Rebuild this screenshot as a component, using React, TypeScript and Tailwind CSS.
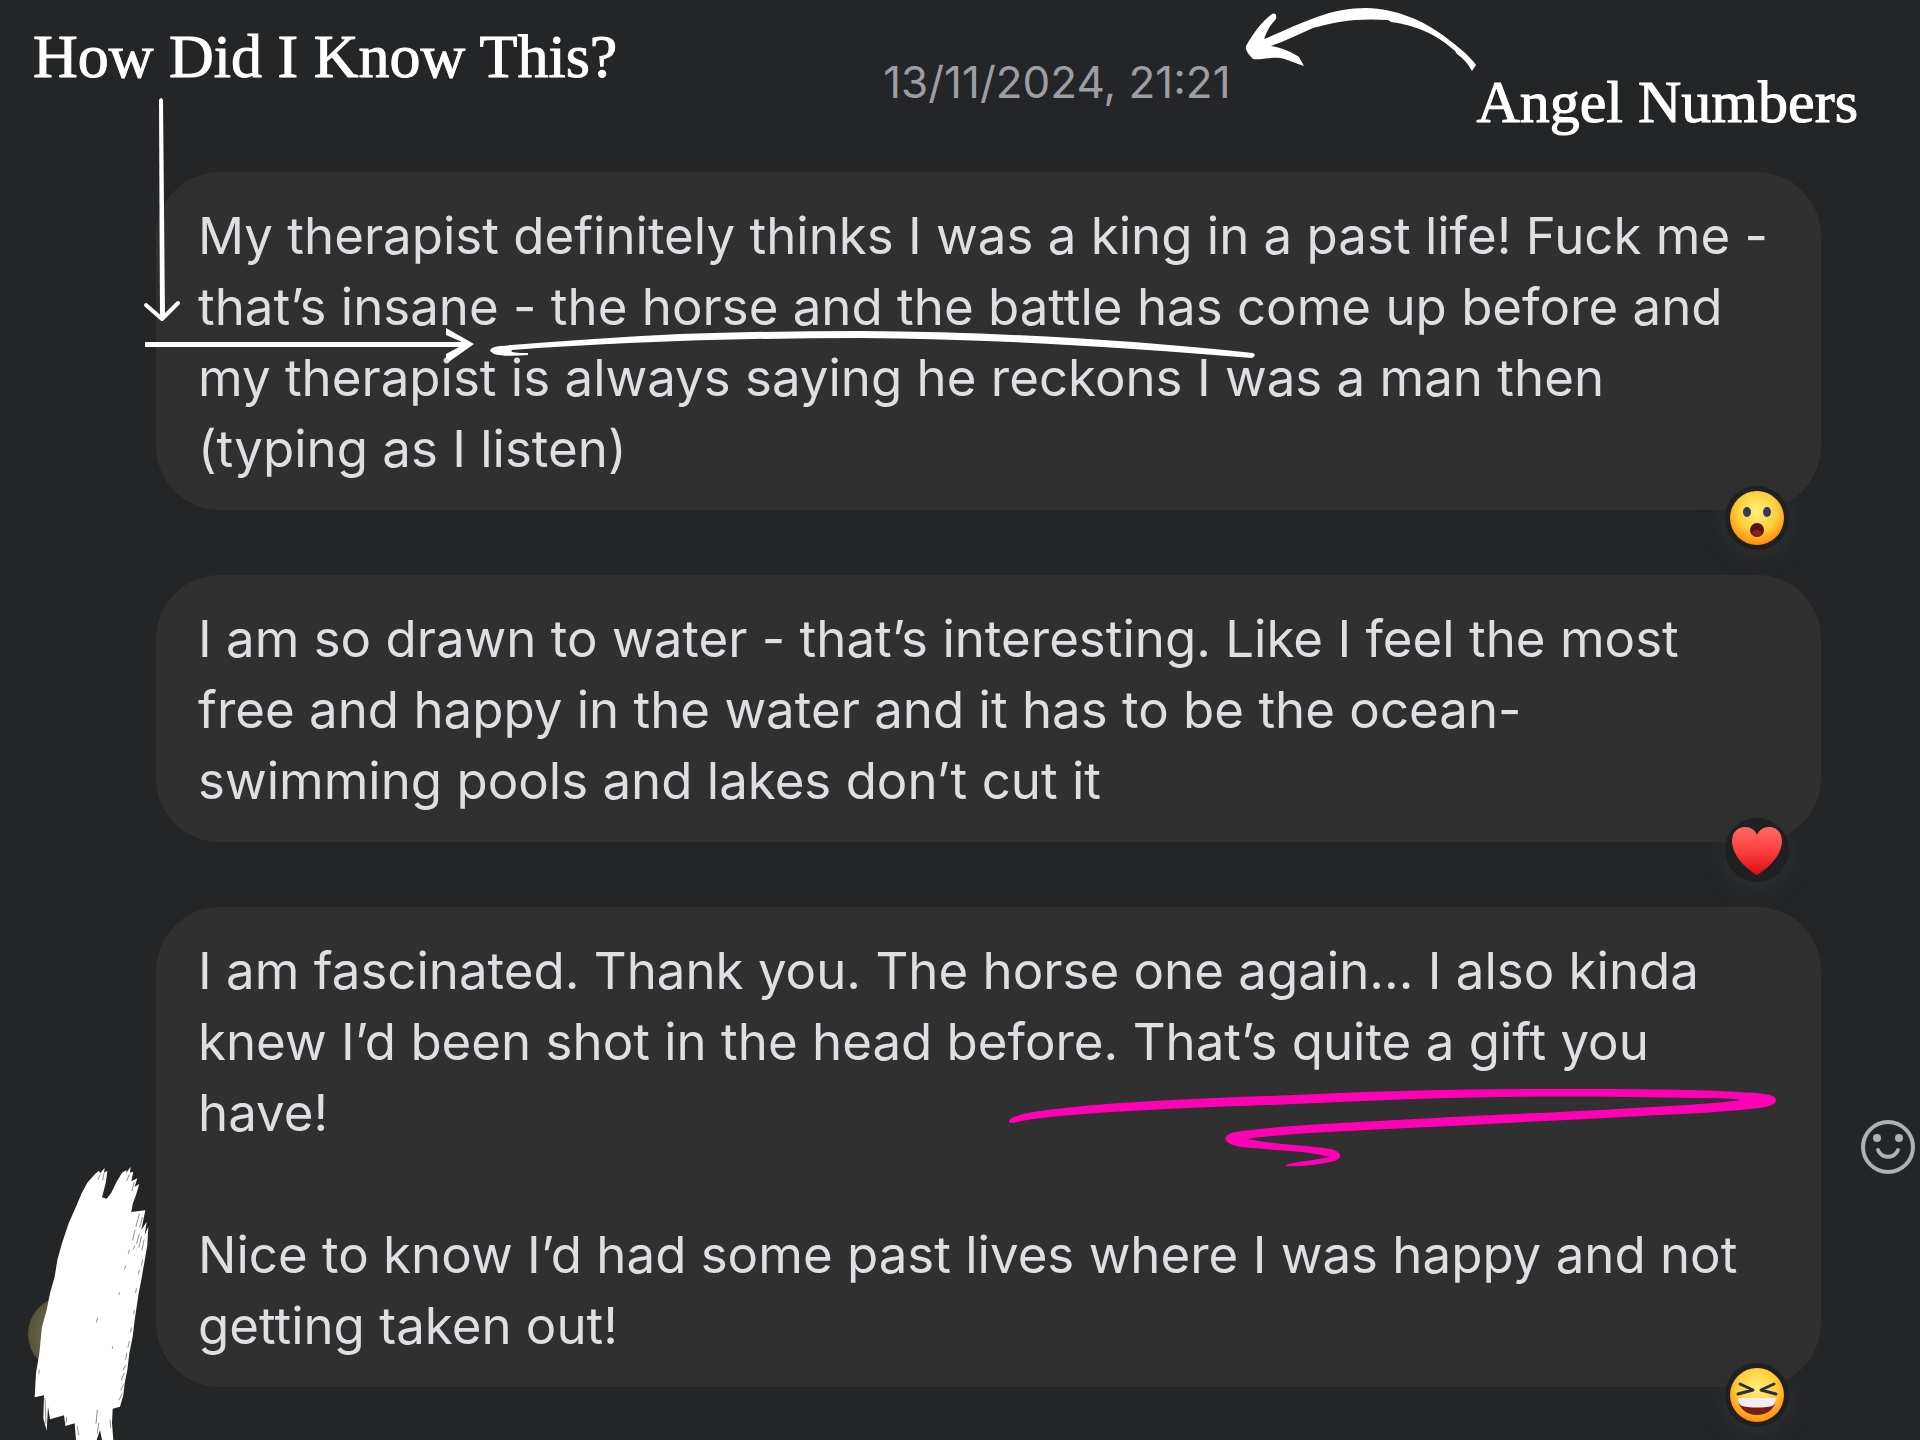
import type { ReactNode } from 'react';

type Message = {
  id: number;
  text: string;
  label: string;
  reaction: ReactNode;
  last?: boolean;
};

function WowFace() {
  return (
    <svg viewBox="0 0 54 54" className="size-[54px]" aria-hidden="true">
      <defs>
        <radialGradient id="wow" cx="50%" cy="38%" r="65%">
          <stop offset="0%" stopColor="#fff07c" />
          <stop offset="55%" stopColor="#ffd03c" />
          <stop offset="100%" stopColor="#ff8208" />
        </radialGradient>
      </defs>
      <circle cx="27" cy="27" r="27" fill="url(#wow)" />
      <ellipse cx="17" cy="21" rx="4" ry="5" fill="#343a5e" />
      <ellipse cx="37" cy="21" rx="4" ry="5" fill="#343a5e" />
      <ellipse cx="27" cy="39" rx="7" ry="7" fill="#5a0d12" />
      <ellipse cx="27" cy="42" rx="5" ry="3" fill="#86201e" />
    </svg>
  );
}

function Heart() {
  return (
    <svg viewBox="0 0 54 54" className="size-[54px]" aria-hidden="true">
      <defs>
        <linearGradient id="heart" x1="0" y1="0" x2="0" y2="1">
          <stop offset="0%" stopColor="#ff6a64" />
          <stop offset="55%" stopColor="#fb3a3c" />
          <stop offset="100%" stopColor="#d80d12" />
        </linearGradient>
      </defs>
      <path
        d="M27 52C24 51 2 36 2 18 2 9 8 4 15 4 21 4 25 7 27 12 29 7 33 4 39 4 46 4 52 9 52 18 52 36 30 51 27 52Z"
        fill="url(#heart)"
      />
    </svg>
  );
}

function LaughFace() {
  return (
    <svg viewBox="0 0 54 54" className="size-[54px]" aria-hidden="true">
      <defs>
        <radialGradient id="laugh" cx="50%" cy="38%" r="65%">
          <stop offset="0%" stopColor="#fff07c" />
          <stop offset="55%" stopColor="#ffd03c" />
          <stop offset="100%" stopColor="#ff8208" />
        </radialGradient>
      </defs>
      <circle cx="27" cy="27" r="27" fill="url(#laugh)" />
      <path
        d="M10 16 23 22 8 26M44 16 31 22 46 26"
        fill="none"
        stroke="#2b2c46"
        strokeWidth="3"
        strokeLinecap="round"
        strokeLinejoin="round"
      />
      <path d="M8 30H46C46 40 38 47 27 47S8 40 8 30Z" fill="#7c1c17" />
      <path d="M8 30H46C46 35 44 37 42 38 33 40 21 40 12 38 10 37 8 35 8 30Z" fill="#f1eef6" />
    </svg>
  );
}

const messages: Message[] = [
  {
    id: 1,
    text: 'My therapist definitely thinks I was a king in a past life! Fuck me -\nthat’s insane - the horse and the battle has come up before and\nmy therapist is always saying he reckons I was a man then\n(typing as I listen)',
    label: 'Wow reaction',
    reaction: <WowFace />,
  },
  {
    id: 2,
    text: 'I am so drawn to water - that’s interesting. Like I feel the most\nfree and happy in the water and it has to be the ocean-\nswimming pools and lakes don’t cut it',
    label: 'Heart reaction',
    reaction: <Heart />,
  },
  {
    id: 3,
    text: 'I am fascinated. Thank you. The horse one again... I also kinda\nknew I’d been shot in the head before. That’s quite a gift you\nhave!\n\nNice to know I’d had some past lives where I was happy and not\ngetting taken out!',
    label: 'Laugh reaction',
    reaction: <LaughFace />,
    last: true,
  },
];

function MessageRow({ message }: { message: Message }) {
  return (
    <li className="flex pr-[5px]">
      <div className="flex w-[156px] shrink-0 items-end pb-[15px] pl-7">
        {message.last && (
          <div className="size-[76px] rounded-full bg-radial from-[#7d7a5c] to-[#47452f]" />
        )}
      </div>

      <div className="relative flex-1 rounded-[64px] bg-[#303030] px-[42px] pt-[28px] pb-[26px]">
        <p className="whitespace-pre text-[51px] leading-[71px] text-[#dedee3]">{message.text}</p>
        <button
          type="button"
          aria-label={message.label}
          className="absolute right-8 -bottom-10 flex size-16 items-center justify-center rounded-full bg-[#1f2021] shadow-[0_4px_20px_2px_#2d2f31]"
        >
          {message.reaction}
        </button>
      </div>

      <div className="ml-10 flex w-[54px] shrink-0 items-center">
        {message.last && (
          <button type="button" aria-label="Add reaction">
            <svg viewBox="0 0 54 54" className="size-[54px]" fill="none" stroke="#b0b1b8" strokeWidth="4">
              <circle cx="27" cy="27" r="25" />
              <circle cx="16" cy="18" r="4" fill="#b0b1b8" stroke="none" />
              <circle cx="38" cy="18" r="4" fill="#b0b1b8" stroke="none" />
              <path d="M17 30C21 39 33 39 37 30" strokeLinecap="round" />
            </svg>
          </button>
        )}
      </div>
    </li>
  );
}

// Hand-drawn marks laid over the conversation
function Marks() {
  return (
    <div className="pointer-events-none absolute inset-0 text-white" aria-hidden="true">
      {/* down arrow */}
      <svg viewBox="140 90 50 240" className="absolute top-[90px] left-[140px] w-[50px]">
        <path d="M159 100Q161 96 163 100L165 318H160Z" fill="currentColor" />
        <path
          d="M146 305 162 319 178 303"
          fill="none"
          stroke="currentColor"
          strokeWidth="4"
          strokeLinecap="round"
          strokeLinejoin="round"
        />
      </svg>

      {/* right arrow */}
      <svg viewBox="140 320 340 50" className="absolute top-[320px] left-[140px] w-[340px]">
        <path d="M145 342H462L446 335V328L474 344 450 361 446 358V354L459 347H145Z" fill="currentColor" />
      </svg>

      {/* underline on the first message */}
      <svg viewBox="480 320 790 50" className="absolute top-[320px] left-[480px] w-[790px]">
        <path
          d="M490 351Q490 347 500 346C560 341 620 337 680 334 740 332 800 331 860 331 1000 332 1130 340 1253 353Q1257 355 1252 358C1130 348 1000 339 860 338 740 338 620 342 512 350Q508 353 528 353L528 355Q505 357 494 354Z"
          fill="currentColor"
        />
      </svg>

      {/* curved arrow */}
      <svg viewBox="1240 0 250 80" className="absolute top-0 left-[1240px] w-[250px]">
        <path
          d="M1472 71C1468 64 1464 59 1457 54L1455 51C1440 37 1420 26 1391 22L1388 20C1358 18 1337 21 1313 28 1299 34 1285 41 1271 46 1282 48 1292 52 1299 57L1304 66C1296 64 1288 59 1280 58 1270 57 1260 60 1253 59 1250 56 1245 51 1246 46 1253 34 1261 22 1272 14Q1277 12 1276 19C1270 25 1267 31 1264 39 1282 32 1299 23 1317 17 1333 11 1350 8 1366 8 1397 9 1422 20 1444 36 1457 46 1469 55 1476 65Z"
          fill="currentColor"
        />
      </svg>

      {/* pink scribble */}
      <svg viewBox="1000 1080 790 100" className="absolute top-[1080px] left-[1000px] w-[790px]">
        <path
          d="M1009 1122C1008 1117 1025 1113 1040 1111 1070 1107 1100 1104 1137 1102 1190 1099 1240 1097 1294 1095 1380 1091 1470 1089 1555 1089 1620 1089 1690 1089 1738 1092 1760 1093 1776 1094 1776 1100 1776 1106 1765 1108 1740 1110 1715 1112 1690 1114 1660 1115 1590 1119 1520 1122 1451 1126 1390 1129 1340 1131 1294 1134 1275 1136 1258 1137 1248 1139 1270 1144 1310 1146 1330 1149 1344 1152 1343 1160 1330 1162 1315 1165 1300 1167 1286 1166 1284 1163 1310 1161 1330 1157 1310 1151 1270 1150 1241 1147 1222 1144 1221 1135 1235 1132 1290 1124 1370 1122 1451 1117 1510 1114 1570 1112 1634 1108 1670 1106 1710 1104 1741 1100 1730 1098 1710 1098 1697 1098 1630 1097 1570 1096 1503 1097 1430 1098 1360 1101 1294 1104 1220 1107 1150 1109 1085 1114 1060 1116 1035 1118 1017 1122Q1010 1124 1009 1122Z"
          fill="#ff00b5"
        />
      </svg>

      {/* brush stroke hiding the avatar */}
      <svg viewBox="0 0 600 900" className="absolute top-[1140px] left-0 w-[200px]">
        <path
          d="M104 772 108 700 118 640 126 560 140 510 150 460 164 410 172 360 186 310 206 250 226 205 245 160 262 128 285 102 297 92 300 100 314 84 312 98 322 92 318 125 308 165 306 172 320 176 334 158 350 125 366 98 380 90 378 100 392 80 390 98 400 95 394 124 412 115 404 140 418 132 408 165 398 192 394 216 436 211 430 240 424 270 440 245 434 285 445 260 442 315 436 350 430 385 424 420 416 460 410 500 404 540 398 590 388 640 382 690 374 730 370 765 360 800 338 806 336 850 340 900 306 900 300 870 290 900 228 900 224 850 196 858 192 826 150 838 144 800 140 872 130 835 132 766Z"
          fill="currentColor"
        />
        <path
          d="M418 222 408 260M427 232 419 262M405 270 398 300M418 282 410 310M424 290 417 322M404 318 400 328M388 330 385 340M376 378 374 388M358 458 357 464M292 534 290 546M338 620 337 625M432 300 426 330M428 360 424 376M418 390 416 402M409 446 407 458M403 512 401 522M394 564 392 576M388 604 384 622M380 640 377 658M376 676 370 690M372 700 364 720M370 735 362 750M366 762 357 780M300 105 294 118M312 100 308 120M388 104 380 122M402 128 396 152M292 810 288 850M296 850 292 880M135 775 138 850M200 832 198 850M232 860 236 885M118 690 116 702M330 840 332 862"
          fill="none"
          stroke="#55575a"
          strokeWidth="2"
          strokeLinecap="round"
        />
      </svg>
    </div>
  );
}

export default function App() {
  return (
    <main className="relative min-h-screen overflow-hidden bg-[#242527] font-['Inter','Liberation_Sans',sans-serif]">
      <header className="flex h-[172px] items-start justify-between pr-[62px] pl-[33px] whitespace-nowrap">
        <h1 className="pt-[20px] font-['Liberation_Serif',serif] text-[62px] leading-[72px] text-white [-webkit-text-stroke:1px_white]">
          How Did I Know This?
        </h1>
        <time dateTime="2024-11-13T21:21" className="ml-5 pt-[58px] text-[44px] leading-[48px] text-[#9d9da4]">
          13/11/2024, 21:21
        </time>
        <p className="pt-[66px] font-['Liberation_Serif',serif] text-[60px] leading-[72px] text-white [-webkit-text-stroke:1px_white]">
          Angel Numbers
        </p>
      </header>

      <ul className="flex flex-col gap-[65px] pb-[53px]">
        {messages.map((message) => (
          <MessageRow key={message.id} message={message} />
        ))}
      </ul>

      <Marks />
    </main>
  );
}
